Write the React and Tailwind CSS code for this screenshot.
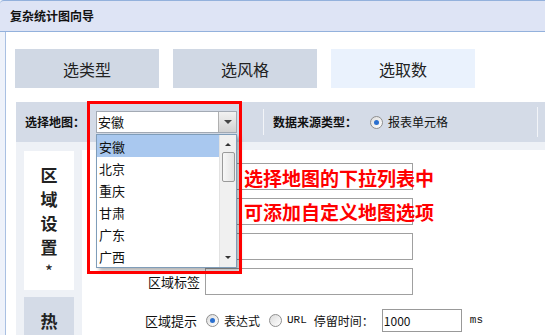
import React from 'react';

const Radio = ({ checked }) => (
  <span className="w-[13px] h-[13px] rounded-full border border-[#8f8f8f] bg-gradient-to-br from-[#dcdcdc] to-white flex items-center justify-center shrink-0">
    {checked && <span className="w-[5px] h-[5px] rounded-full bg-[#2a6fcf]" />}
  </span>
);

const provinces = ['安徽', '北京', '重庆', '甘肃', '广东', '广西'];

const App = () => {
  return (
    <div
      className="relative w-[545px] h-[335px] overflow-hidden bg-[#eef2fa] text-[#111]"
      style={{ fontFamily: '"Noto Sans CJK SC", "Liberation Sans", sans-serif' }}
    >
      {/* 标题栏 */}
      <div className="h-[32px] bg-[#dee4f5] border-t border-b border-[#93b1dc] rounded-tl-[4px] px-[10px] flex items-center text-[12px] font-bold">
        复杂统计图向导
      </div>

      <div className="ml-[5px] h-[303px] border-l border-[#a9c0e2] bg-white flex flex-col">
        {/* 步骤 */}
        <div className="pt-[17px] pl-[9px] flex gap-[14px]">
          <div className="w-[144px] h-[39px] bg-[#d0d8e4] flex items-center justify-center text-[16px] text-[#222]">选类型</div>
          <div className="w-[144px] h-[39px] bg-[#d0d8e4] flex items-center justify-center text-[16px] text-[#222]">选风格</div>
          <div className="w-[144px] h-[39px] bg-[#eaf2fd] flex items-center justify-center text-[16px] text-[#222]">选取数</div>
        </div>

        {/* 工具栏 */}
        <div className="mt-[14px] ml-[10px] h-[40px] bg-[#d4dbe7] flex items-center pl-[9px] text-[12px]">
          <span className="w-[71px] font-bold">选择地图：</span>
          <div className="w-[141px] h-[22px] border border-[#a3aab4] bg-white flex">
            <span className="flex-1 pl-[1px] text-[13px] leading-[20px]">安徽</span>
            <span className="w-[18px] h-full bg-gradient-to-b from-[#f2f2f2] to-[#d2d2d2] border-l border-[#b0b0b0] flex items-center justify-center">
              <span className="w-0 h-0 border-l-[4px] border-r-[4px] border-t-[4px] border-l-transparent border-r-transparent border-t-[#444]" />
            </span>
          </div>
          <span className="ml-[26px] w-px h-[26px] bg-[#f2f4f8]" />
          <span className="ml-[9px] font-bold">数据来源类型：</span>
          <span className="ml-[13px] flex items-center gap-[5px]">
            <Radio checked />
            <span>报表单元格</span>
          </span>
          <span className="ml-auto mr-[7px] w-px h-[30px] bg-[#f2f4f8]" />
        </div>
        <div className="h-[8px] ml-[10px] bg-[#eef1f6]" />

        {/* 内容 */}
        <div className="flex flex-1 min-h-0">
          <div className="ml-[10px] w-[66px] bg-[#eef1f6] pl-[8px] flex flex-col">
            <div className="mt-px w-[50px] h-[139px] bg-white flex flex-col items-center pt-[12px] text-[17px] leading-[24px] font-semibold text-[#222]">
              <span>区</span>
              <span>域</span>
              <span>设</span>
              <span>置</span>
              <span className="font-normal">*</span>
            </div>
            <div className="mt-[7px] w-[50px] flex-1 bg-[#d4dbe7] flex justify-center pt-[11px] text-[17px] font-semibold text-[#222]">热</div>
          </div>

          <div className="pt-[13px] flex flex-col gap-[8px] text-[13px]">
            {['区域名称', '区域颜色', '区域链接', '区域标签'].map((label) => (
              <div key={label} className="h-[27px] flex items-center">
                <span className="w-[118px] text-right">{label}</span>
                <span className="ml-[5px] w-[208px] h-[27px] border border-[#a0a0a0] bg-white" />
              </div>
            ))}
            <div className="mt-[4px] h-[27px] flex items-center text-[12px]">
              <span className="w-[118px] text-right text-[13px] pr-[3px]">区域提示</span>
              <span className="ml-[6px]"><Radio checked /></span>
              <span className="ml-[5px]">表达式</span>
              <span className="ml-[9px]"><Radio /></span>
              <span className="ml-[5px] text-[11px]" style={{ fontFamily: '"Liberation Mono", monospace' }}>URL</span>
              <span className="ml-[7px]">停留时间：</span>
              <span className="ml-[8px] w-[80px] h-[23px] border border-[#999] bg-white pl-[1px] leading-[21px]">1000</span>
              <span className="ml-[8px] text-[11px]" style={{ fontFamily: '"Liberation Mono", monospace' }}>ms</span>
            </div>
          </div>
        </div>
      </div>

      {/* 下拉列表 */}
      <div className="absolute left-[96px] top-[134px] w-[141px] h-[134px] border border-[#7f9db9] bg-white shadow-[3px_3px_4px_rgba(0,0,0,0.3)] flex">
        <div className="flex-1 flex flex-col text-[13px]">
          {provinces.map((p, i) => (
            <div key={p} className={`h-[22px] pl-[2px] pt-[2px] leading-[20px] ${i === 0 ? 'bg-[#a9c8ef]' : ''}`}>{p}</div>
          ))}
        </div>
        <div className="w-[17px] bg-[#f0f0f0] border-l border-[#e2e2e2] flex flex-col items-center">
          <span className="mt-[8px] w-0 h-0 border-l-[3px] border-r-[3px] border-b-[3px] border-l-transparent border-r-transparent border-b-[#333]" />
          <span className="mt-[6px] w-[13px] h-[30px] rounded-[2px] border border-[#9a9a9a] bg-gradient-to-r from-[#f7f7f7] to-[#e3e3e3]" />
          <span className="mt-auto mb-[8px] w-0 h-0 border-l-[3px] border-r-[3px] border-t-[3px] border-l-transparent border-r-transparent border-t-[#333]" />
        </div>
      </div>

      {/* 红框标注 */}
      <div className="absolute left-[87px] top-[101px] w-[155px] h-[173px] border-[3px] border-[#ff0000]" />
      <div className="absolute left-[244px] top-[165px] text-[19px] leading-[26px] font-bold text-[#ff0000]">
        选择地图的下拉列表中
      </div>
      <div className="absolute left-[244px] top-[199px] text-[19px] leading-[26px] font-bold text-[#ff0000]">
        可添加自定义地图选项
      </div>
    </div>
  );
};

export default App;
